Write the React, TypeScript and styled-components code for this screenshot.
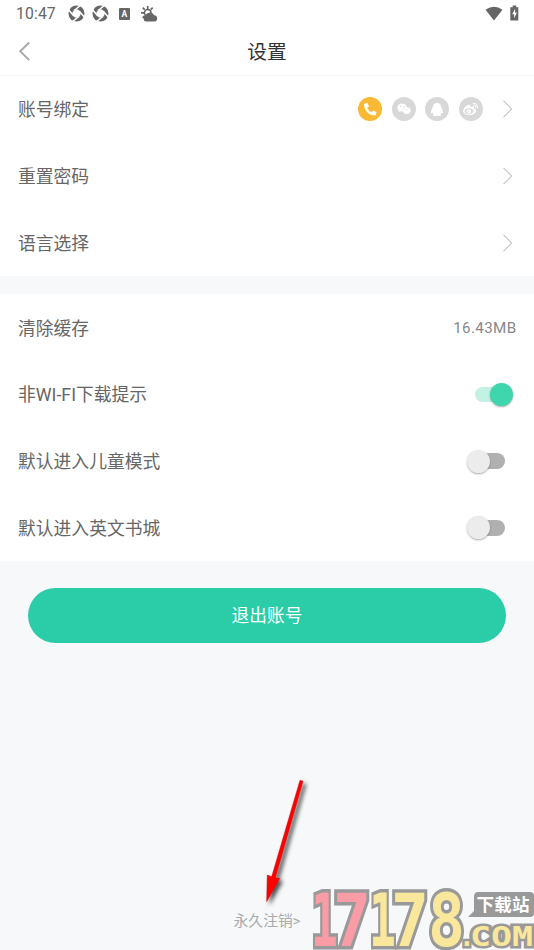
import React from 'react';
import styled, { createGlobalStyle } from 'styled-components';
import { FaWeixin, FaWeibo, FaPhoneAlt } from 'react-icons/fa';

const GlobalStyle = createGlobalStyle`
  * { box-sizing: border-box; }
  body { margin: 0; background: #f6f8fa; }
  button { font: inherit; border: 0; padding: 0; background: none; }
`;

const Screen = styled.div`
  position: relative;
  display: flex;
  flex-direction: column;
  width: 534px;
  height: 950px;
  overflow: hidden;
  background: #f6f8fa;
  color: #666;
  font-family: Roboto, 'Noto Sans CJK SC', sans-serif;
`;

const StatusBar = styled.div`
  display: flex;
  align-items: center;
  height: 27px;
  padding: 0 15px 0 16px;
  background: #fff;
  color: #666;
  font-size: 15.7px;
  letter-spacing: 0.15px;
`;

const Clock = styled.span`
  width: 51.5px;
  line-height: 26px;
  padding-top: 1px;
`;

const StatusGroup = styled.div<{ $gap: number; $end?: boolean }>`
  display: flex;
  align-items: center;
  gap: ${(p) => p.$gap}px;
  margin-left: ${(p) => (p.$end ? 'auto' : '0')};
  padding-bottom: ${(p) => (p.$end ? 1 : 0)}px;
  svg { display: block; }
`;

const Header = styled.header`
  display: grid;
  grid-template-columns: 60px 1fr 60px;
  align-items: center;
  height: 49px;
  background: #fff;
  border-bottom: 1px solid #f6f6f6;
`;

const Back = styled.button`
  display: flex;
  padding-left: 18px;
`;

const Title = styled.h1`
  margin: 0;
  padding-top: 3px;
  text-align: center;
  font-size: 19.7px;
  font-weight: 400;
  line-height: 28px;
  color: #333;
`;

const Section = styled.section`
  background: #fff;
  margin-bottom: 18px;
`;

const Row = styled.div<{ $end: number }>`
  display: flex;
  align-items: center;
  justify-content: space-between;
  height: 66.75px;
  padding: 0 ${(p) => p.$end}px 0 18px;
`;

const Label = styled.span`
  padding-top: 2px;
  font-size: 17.8px;
  line-height: 26px;
`;

const Value = styled.span`
  font-size: 15.2px;
  letter-spacing: 0.35px;
  color: #888;
`;

const Accounts = styled.div`
  display: flex;
  align-items: center;
  gap: 9.4px;
`;

const Badge = styled.span<{ $active?: boolean }>`
  display: flex;
  align-items: center;
  justify-content: center;
  width: 24px;
  height: 24px;
  border-radius: 50%;
  color: #fff;
  background: ${(p) => (p.$active ? '#f9b934' : '#d8d8d8')};
`;

const ChevronBox = styled.span`
  display: flex;
  margin-left: 10px;
`;

const Thumb = styled.span<{ $on?: boolean }>`
  flex: none;
  width: 23px;
  height: 23px;
  border-radius: 50%;
  background: ${(p) => (p.$on ? '#3fd5ad' : '#ececec')};
  box-shadow: 0 1px 2px rgba(0, 0, 0, 0.32);
`;

const Track = styled.button<{ $on?: boolean }>`
  display: flex;
  align-items: center;
  justify-content: ${(p) => (p.$on ? 'flex-end' : 'flex-start')};
  width: 30px;
  height: 15.5px;
  border-radius: 8px;
  background: ${(p) => (p.$on ? '#c3f2e5' : '#b0b0b0')};
  ${Thumb} {
    margin: ${(p) => (p.$on ? '0 -8px 0 0' : '0 0 0 -8px')};
  }
`;

const SwitchBox = styled.span<{ $on?: boolean }>`
  display: flex;
  width: 38px;
  justify-content: ${(p) => (p.$on ? 'flex-start' : 'flex-end')};
`;

const Logout = styled.button`
  align-self: center;
  width: 478px;
  height: 55px;
  margin-top: 9px;
  padding-bottom: 3px;
  border-radius: 28px;
  background: #2bcda9;
  color: #fff;
  font-size: 17.7px;
`;

const DeleteLink = styled.a`
  align-self: center;
  margin-top: auto;
  margin-bottom: 18px;
  font-size: 14.8px;
  line-height: 22px;
  color: #aaa;
`;

const Arrow = styled.svg`
  position: absolute;
  left: 255px;
  top: 770px;
`;

const Watermark = styled.svg`
  position: absolute;
  left: 304px;
  top: 884px;
`;

const Chevron = () => (
  <ChevronBox>
    <svg width="12" height="18" viewBox="0 0 12 18" fill="none" stroke="#c4c4c4" strokeWidth="1.1">
      <path d="M1.5 .8 9.7 9 1.5 17.2" />
    </svg>
  </ChevronBox>
);

const Swirl = () => (
  <svg width="17" height="17" viewBox="-8.5 -8.5 17 17">
    <circle r="8" fill="#666" />
    <path d="M-1.6-4 1.6-4 4-1.6 4 1.6 1.6 4-1.6 4-4 1.6-4-1.6Z" fill="#fff" />
    {[0, 90, 180, 270].map((a) => (
      <path key={a} transform={`rotate(${a})`} d="M-2.6-2.6 4-8.2" stroke="#fff" strokeWidth="1.5" />
    ))}
  </svg>
);

const Penguin = () => (
  <svg width="14" height="15" viewBox="0 0 14 15" fill="currentColor">
    <path d="M7 1C4.3 1 2.7 3 2.7 5.4 1.7 7.1 1 8.8 1 10.5c0 1.3.6 1.4 1.6.1.2.8.5 1.3 1 1.8-.8.3-1.2 1.3.2 1.5 1.2.2 2.3 0 3.2-.5.9.5 2 .7 3.2.5 1.4-.2 1-1.2.2-1.5.5-.5.8-1 1-1.8 1 1.3 1.6 1.2 1.6-.1 0-1.7-.7-3.4-1.7-5.1C11.3 3 9.7 1 7 1Z" />
  </svg>
);

const Switch = ({ on }: { on?: boolean }) => (
  <SwitchBox $on={on}>
    <Track $on={on} role="switch" aria-checked={!!on}>
      <Thumb $on={on} />
    </Track>
  </SwitchBox>
);

export default function App() {
  return (
    <>
      <GlobalStyle />
      <Screen>
        <StatusBar>
          <Clock>10:47</Clock>
          <StatusGroup $gap={7.8}>
            <Swirl />
            <Swirl />
            <svg width="16" height="14" viewBox="0 0 16 14">
              <rect x="2" y="1" width="11" height="12" rx="1" fill="#666" />
              <text x="7.5" y="10.2" textAnchor="middle" fontSize="8.5" fontWeight="700" fill="#fff">A</text>
            </svg>
            <svg width="17" height="16" viewBox="0 0 17 16" fill="#666">
              <g stroke="#666" strokeWidth="1.7" fill="none">
                <path d="M6.7 0v3M1.7 1.7l2 2M11.7 1.7l-2 2M0 6.8h3M1.7 11.8l2-2" />
                <circle cx="6.7" cy="6.8" r="3.3" strokeWidth="1.6" />
              </g>
              <path d="M5 15.6a3.5 3.5 0 0 1-.4-6.6A4.8 4.8 0 0 1 13.2 9.3a3.2 3.2 0 0 1 .5 6.3Z" />
            </svg>
          </StatusGroup>
          <StatusGroup $gap={7} $end>
            <svg width="18" height="15" viewBox="0 0 18 15" fill="#666">
              <path d="M.5 3.8Q9-2.4 17.5 3.8L9 14.5Z" />
            </svg>
            <svg width="9" height="16" viewBox="0 0 9 16">
              <path d="M2.7.5h3.6v1.7h2V15.5H.3V2.2h2.4Z" fill="#666" />
              <path d="M5.1 3.8 2.2 9.3h1.9v4l2.8-5.7H5.1Z" fill="#fff" />
            </svg>
          </StatusGroup>
        </StatusBar>
        <Header>
          <Back aria-label="返回">
            <svg width="13" height="20" viewBox="0 0 13 20" fill="none" stroke="#aaa" strokeWidth="2">
              <path d="M11.2 1.5 2.2 10.3l9 8.8" />
            </svg>
          </Back>
          <Title>设置</Title>
        </Header>
        <Section>
          <Row $end={20}>
            <Label>账号绑定</Label>
            <Accounts>
              <Badge $active><FaPhoneAlt size={12.5} /></Badge>
              <Badge><FaWeixin size={14} /></Badge>
              <Badge><Penguin /></Badge>
              <Badge><FaWeibo size={15} /></Badge>
              <Chevron />
            </Accounts>
          </Row>
          <Row $end={20}>
            <Label>重置密码</Label>
            <Chevron />
          </Row>
          <Row $end={20}>
            <Label>语言选择</Label>
            <Chevron />
          </Row>
        </Section>
        <Section>
          <Row $end={17.5}>
            <Label>清除缓存</Label>
            <Value>16.43MB</Value>
          </Row>
          <Row $end={21.5}>
            <Label>非WI-FI下载提示</Label>
            <Switch on />
          </Row>
          <Row $end={29.5}>
            <Label>默认进入儿童模式</Label>
            <Switch />
          </Row>
          <Row $end={29.5}>
            <Label>默认进入英文书城</Label>
            <Switch />
          </Row>
        </Section>
        <Logout>退出账号</Logout>
        <DeleteLink>永久注销&gt;</DeleteLink>
        <Arrow width="65" height="140" viewBox="255 770 65 140">
          <defs>
            <filter id="soft" x="-50%" y="-20%" width="200%" height="140%">
              <feDropShadow dx="3" dy="3" stdDeviation="2" floodColor="#000" floodOpacity=".7" />
            </filter>
          </defs>
          <g filter="url(#soft)">
            <path d="M300 780.3 303 781.2 275.3 878l4.4.3L266.7 901.5l.6-26.5 4.4 1.8Z" fill="#f00" stroke="#c00" strokeWidth=".5" strokeLinejoin="round" />
          </g>
        </Arrow>
        <Watermark width="230" height="66" viewBox="304 884 230 66">
          <text
            y="946"
            fontFamily="DejaVu Sans Mono"
            fontWeight="700"
            fontSize="73"
            stroke="#999"
            strokeWidth="7"
            paintOrder="stroke"
            strokeLinejoin="miter"
            fill="#f9e79c"
          >
            <tspan x="311" textLength="27" lengthAdjust="spacingAndGlyphs" fill="#f99ca5">1</tspan>
            <tspan x="333" textLength="38" lengthAdjust="spacingAndGlyphs" fill="#f99ca5">7</tspan>
            <tspan x="369" textLength="27" lengthAdjust="spacingAndGlyphs">1</tspan>
            <tspan x="391" textLength="38" lengthAdjust="spacingAndGlyphs">7</tspan>
            <tspan x="428" textLength="37" lengthAdjust="spacingAndGlyphs">8</tspan>
          </text>
          <path d="M478 892H530q4 0 4 4v17q0 4-4 4H468l6-6v-14q0-5 4-5Z" fill="#999" />
          <text x="476.5" y="911" fontFamily="Noto Sans CJK SC" fontWeight="700" fontSize="17.5" fill="#fff" textLength="53">下载站</text>
          <text
            y="946"
            fontFamily="DejaVu Sans Mono"
            fontWeight="700"
            fontSize="26"
            fill="#f9e79c"
            stroke="#999"
            strokeWidth="5"
            paintOrder="stroke"
          >
            <tspan x="459">.</tspan>
            <tspan x="470" textLength="63" lengthAdjust="spacingAndGlyphs">COM</tspan>
          </text>
        </Watermark>
      </Screen>
    </>
  );
}
